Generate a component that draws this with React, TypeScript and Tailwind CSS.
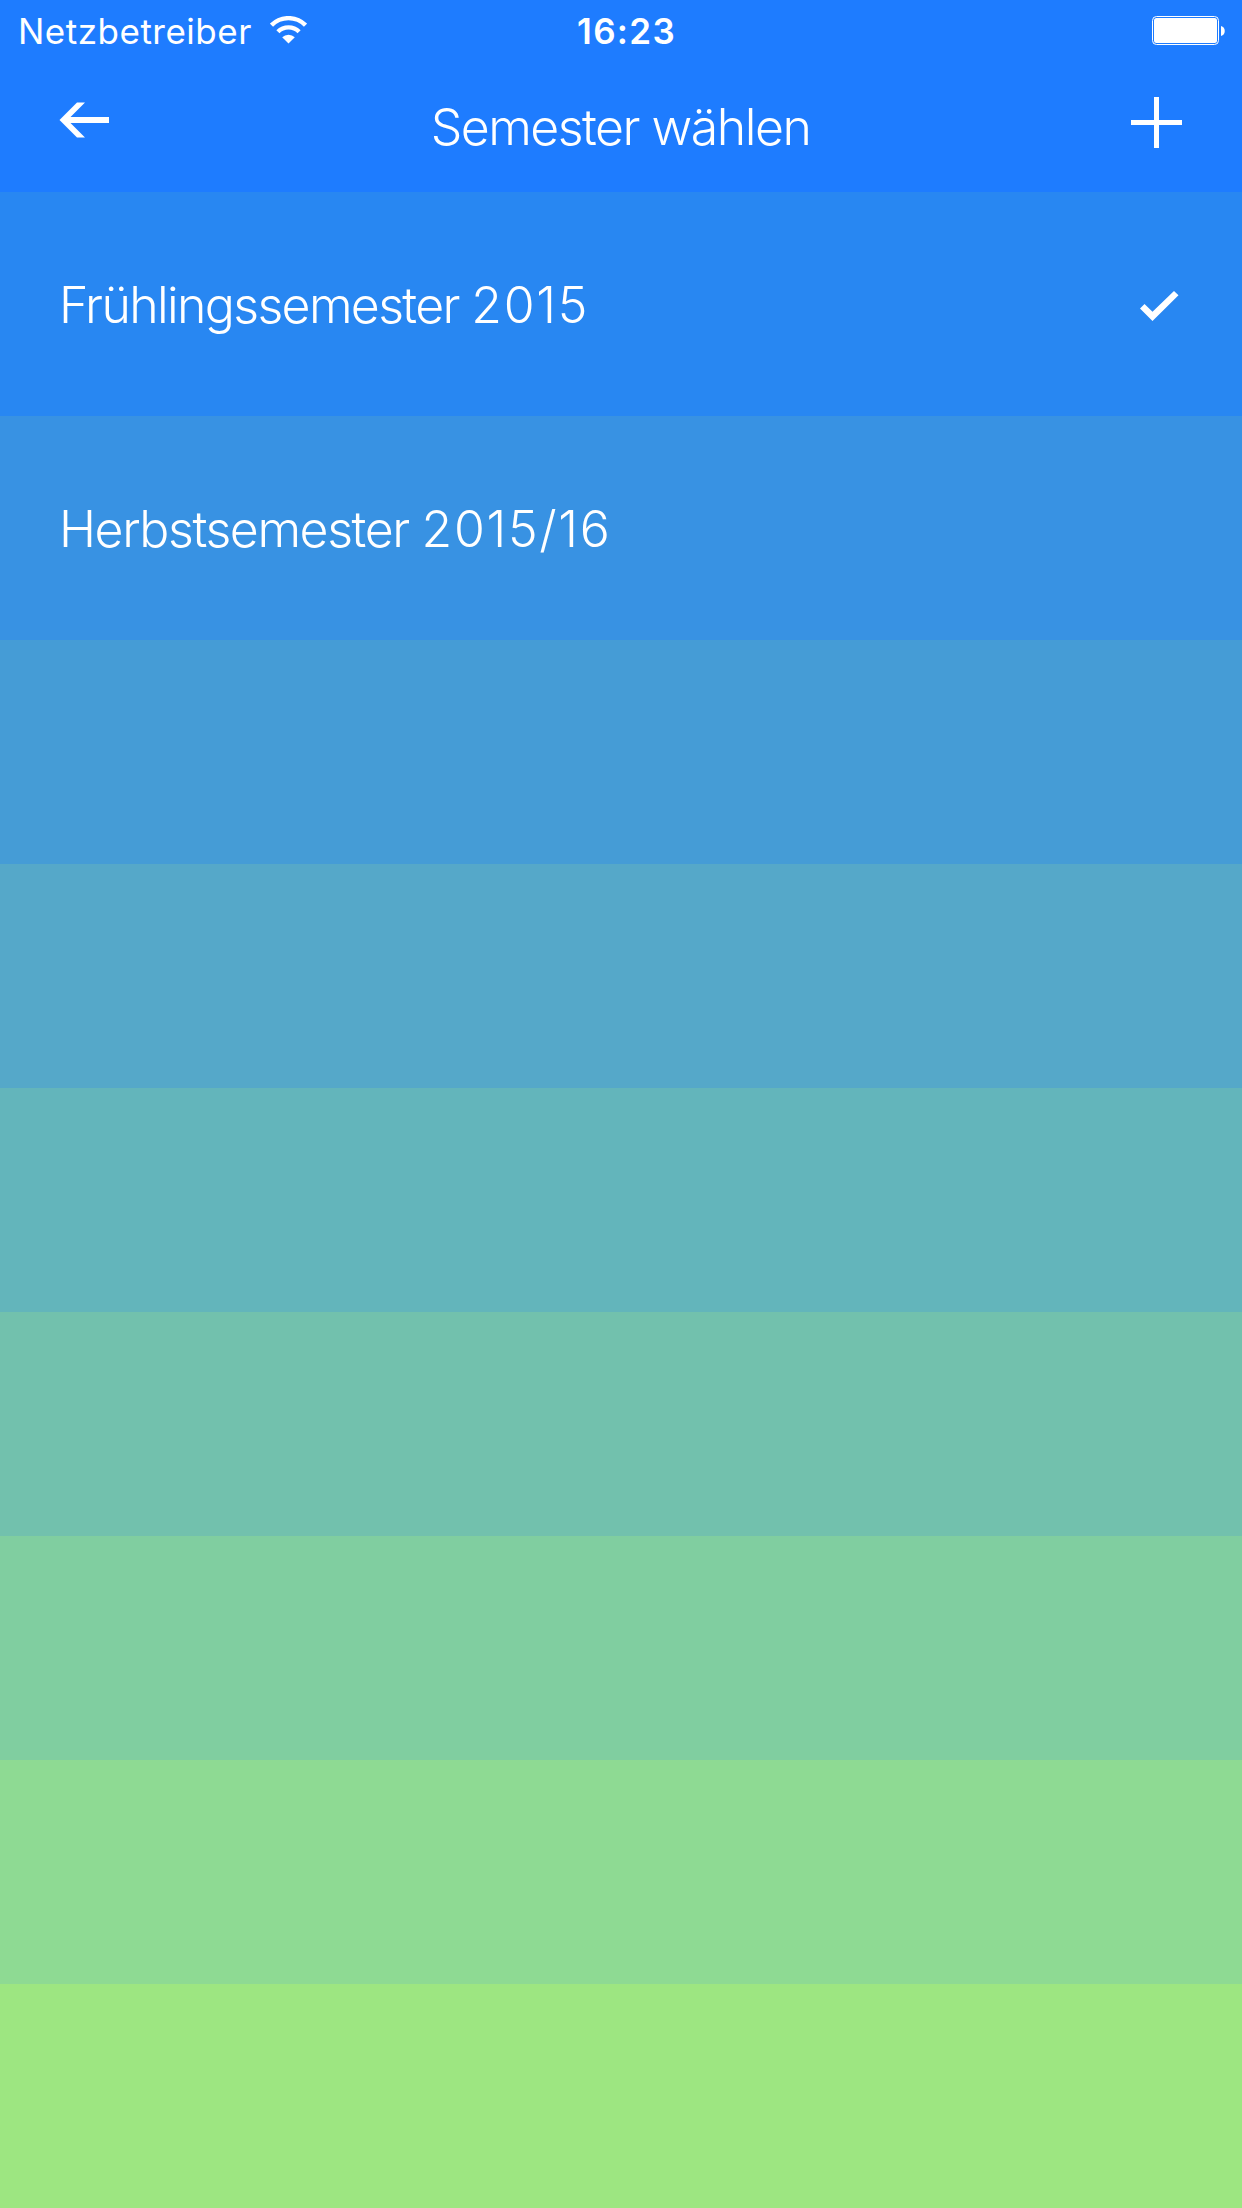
const rows = [
  { color: 'bg-[#2887f2]', name: 'Frühlingssemester', year: '2015', selected: true, spacing: 'tracking-[-1.65px]' },
  { color: 'bg-[#3892e3]', name: 'Herbstsemester', year: '2015/16', selected: false, spacing: 'tracking-[-1.4px]' },
  { color: 'bg-[#459cd6]' },
  { color: 'bg-[#55a8c9]' },
  { color: 'bg-[#63b5bb]' },
  { color: 'bg-[#72c1ad]' },
  { color: 'bg-[#80cea0]' },
  { color: 'bg-[#8eda93]' },
  { color: 'bg-[#9de681]' },
];

function StatusBar() {
  return (
    <div className="grid h-[61px] grid-cols-3 items-center pr-[17px] pl-[17px]">
      <div className="flex items-center">
        <span className="w-[253px] whitespace-nowrap pt-px pl-px text-[35px] leading-[60px] tracking-[0.5px]">Netzbetreiber</span>
        <svg width="37" height="28" viewBox="0 0 37 28" className="-mt-px" fill="none" stroke="white">
          <path d="M1.5 9.2A24 24 0 0 1 35.5 9.2" strokeWidth="4.4" />
          <path d="M7.9 15.8A15 15 0 0 1 29.1 15.8" strokeWidth="4.4" />
          <path d="M18.5 27.5L12.2 21.2A9 9 0 0 1 24.8 21.2Z" fill="white" stroke="none" />
        </svg>
      </div>
      <span className="pt-px pl-[11px] text-center text-[35px] leading-[60px] font-semibold tracking-[1.3px]">16:23</span>
      <svg width="73" height="29" viewBox="0 0 73 29" className="justify-self-end">
        <rect x="0.5" y="0.5" width="66" height="28" rx="4" fill="none" stroke="white" />
        <rect x="2" y="2" width="63" height="25" rx="2.5" fill="white" />
        <path d="M69 10C74 11 74 19 69 20Z" fill="white" />
      </svg>
    </div>
  );
}

export default function App() {
  return (
    <main className="min-h-[2208px] w-full bg-[#1e7cff] font-['Inter',sans-serif] text-white">
      <header className="h-[192px]">
        <StatusBar />
        <div className="flex h-[131px] items-start justify-between pr-[60px] pl-[59px]">
          <svg width="51" height="36" viewBox="0 0 51 36" className="mt-[41px]">
            <path d="M0.5 18L18 0.5H26L11.5 15H50V21H11.5L26 35.5H18Z" fill="white" />
          </svg>
          <h1 className="mt-[34px] whitespace-nowrap text-[50px] leading-[64px] font-light tracking-[-1.5px]">Semester wählen</h1>
          <svg width="51" height="51" viewBox="0 0 51 51" className="mt-[36px]">
            <path d="M23 0h5v23h23v5H28v23h-5V28H0v-5h23z" fill="white" />
          </svg>
        </div>
      </header>
      <ul>
        {rows.map((row) => (
          <li key={row.color} className={`flex h-56 items-center justify-between pr-[63px] pl-[59px] ${row.color}`}>
            {row.name && (
              <span className={`mt-[2px] whitespace-nowrap text-[50px] font-light ${row.spacing}`}>
                {row.name} <span className="tracking-[1.7px]">{row.year}</span>
              </span>
            )}
            {row.selected && (
              <svg width="39" height="31" viewBox="0 0 39 31" className="mt-[4px]">
                <path d="M0 17.5L4.5 13L12.5 20.8L34 0L38.5 4.3L12.5 30Z" fill="white" />
              </svg>
            )}
          </li>
        ))}
      </ul>
    </main>
  );
}
